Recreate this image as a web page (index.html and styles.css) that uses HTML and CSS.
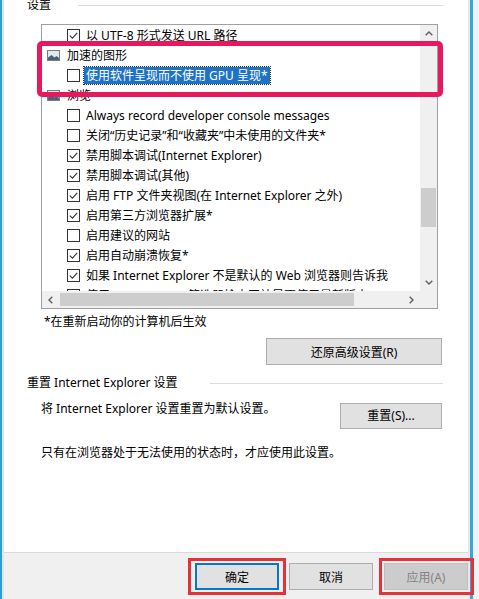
FILE: index.html
```html
<!DOCTYPE html>
<html lang="zh-CN">
  <head>
    <meta charset="UTF-8" />
    <title>Internet 选项 - 高级</title>
    <link rel="stylesheet" href="styles.css">
  </head>
  <body>
    <!-- shared glyphs -->
    <svg class="defs" width="0" height="0" aria-hidden="true">
      <symbol id="box" viewBox="0 0 13 13">
        <rect x="0.5" y="0.5" width="12" height="12" fill="#fff" stroke="#333"/>
      </symbol>
      <symbol id="tick" viewBox="0 0 13 13">
        <rect x="0.5" y="0.5" width="12" height="12" fill="#fff" stroke="#333"/>
        <path d="M2.8 6.6l2.6 2.6 4.8-5.4" fill="none" stroke="#333" stroke-width="1.1"/>
      </symbol>
      <symbol id="pic" viewBox="0 0 13 11">
        <rect x="0.5" y="0.5" width="12" height="10" fill="#dfe9f2" stroke="#7c7c7c"/>
        <path d="M1 10V7.5L4.5 5l3 2.5 2-1.5L12 8v2z" fill="#47627a"/>
      </symbol>
      <symbol id="up" viewBox="0 0 8 5"><path d="M0.7 4.3L4 1l3.3 3.3" fill="none" stroke="#606060" stroke-width="1.4"/></symbol>
      <symbol id="down" viewBox="0 0 8 5"><path d="M0.7 0.7L4 4l3.3-3.3" fill="none" stroke="#606060" stroke-width="1.4"/></symbol>
      <symbol id="left" viewBox="0 0 5 8"><path d="M4.3 0.7L1 4l3.3 3.3" fill="none" stroke="#606060" stroke-width="1.4"/></symbol>
      <symbol id="right" viewBox="0 0 5 8"><path d="M0.7 0.7L4 4 0.7 7.3" fill="none" stroke="#606060" stroke-width="1.4"/></symbol>
    </svg>

    <div class="screen">
      <div class="frame-left"></div>

      <div class="main">
        <div class="page">
          <!-- 设置 -->
          <div class="group-title"><span>设置</span><i class="rule"></i></div>

          <div class="listbox">
            <ul class="items">
              <li class="opt"><svg class="cb"><use href="#tick"/></svg><span>以 UTF-8 形式发送 URL 路径</span></li>
              <li class="cat"><svg class="ico"><use href="#pic"/></svg><span>加速的图形</span></li>
              <li class="opt"><svg class="cb"><use href="#box"/></svg><span class="sel">使用软件呈现而不使用 GPU 呈现*</span></li>
              <li class="cat"><svg class="ico"><use href="#pic"/></svg><span>浏览</span></li>
              <li class="opt"><svg class="cb"><use href="#box"/></svg><span>Always record developer console messages</span></li>
              <li class="opt"><svg class="cb"><use href="#box"/></svg><span>关闭“历史记录”和“收藏夹”中未使用的文件夹*</span></li>
              <li class="opt"><svg class="cb"><use href="#tick"/></svg><span>禁用脚本调试(Internet Explorer)</span></li>
              <li class="opt"><svg class="cb"><use href="#tick"/></svg><span>禁用脚本调试(其他)</span></li>
              <li class="opt"><svg class="cb"><use href="#tick"/></svg><span>启用 FTP 文件夹视图(在 Internet Explorer 之外)</span></li>
              <li class="opt"><svg class="cb"><use href="#tick"/></svg><span>启用第三方浏览器扩展*</span></li>
              <li class="opt"><svg class="cb"><use href="#box"/></svg><span>启用建议的网站</span></li>
              <li class="opt"><svg class="cb"><use href="#tick"/></svg><span>启用自动崩溃恢复*</span></li>
              <li class="opt"><svg class="cb"><use href="#tick"/></svg><span>如果 Internet Explorer 不是默认的 Web 浏览器则告诉我</span></li>
              <li class="opt"><svg class="cb"><use href="#tick"/></svg><span>使用 SmartScreen 筛选器检查网站是否使用最新版本</span></li>
            </ul>

            <div class="vbar">
              <span class="arrow"><svg class="chev-v"><use href="#up"/></svg></span>
              <div class="track"><div class="thumb-v"></div></div>
              <span class="arrow"><svg class="chev-v"><use href="#down"/></svg></span>
            </div>

            <div class="hbar">
              <span class="arrow"><svg class="chev-h"><use href="#left"/></svg></span>
              <div class="thumb-h"></div>
              <span class="spacer"></span>
              <span class="arrow"><svg class="chev-h"><use href="#right"/></svg></span>
            </div>
            <div class="corner"></div>
          </div>

          <p class="note">*在重新启动你的计算机后生效</p>

          <div class="actions">
            <button class="btn btn-restore" type="button">还原高级设置(R)</button>
          </div>

          <!-- 重置 -->
          <div class="group-title second"><span>重置 Internet Explorer 设置</span><i class="rule"></i></div>

          <div class="reset-row">
            <span>将 Internet Explorer 设置重置为默认设置。</span>
            <button class="btn btn-reset" type="button">重置(S)...</button>
          </div>

          <p class="hint">只有在浏览器处于无法使用的状态时，才应使用此设置。</p>

          <div class="focus-mark"></div>
        </div>

        <div class="footer">
          <span class="mark"><button class="btn fbtn default" type="button">确定</button></span>
          <button class="btn fbtn" type="button">取消</button>
          <span class="mark mark-apply"><button class="btn fbtn" type="button" disabled>应用(A)</button></span>
        </div>
      </div>

      <div class="frame-right"></div>
    </div>
  </body>
</html>
```

FILE: styles.css
```css
* {
  box-sizing: border-box;
}

body {
  margin: 0;
  font-family: "Noto Sans", "Noto Sans CJK SC", sans-serif;
  font-size: 12px;
  color: #000;
  background: #f0f0f0;
}

.defs {
  position: absolute;
  width: 0;
  height: 0;
}

.screen {
  display: flex;
  width: 479px;
  height: 599px;
  overflow: hidden;
}

.frame-left {
  width: 4px;
  background: linear-gradient(to right, #2a9fd0 0 2px, #dde6ec 2px);
}

.frame-right {
  width: 11px;
  background: linear-gradient(to right, #e4e9ee 0 2px, #3aa6d6 2px 5px, #eef3f6 5px);
}

.main {
  flex: 1;
  display: flex;
  flex-direction: column;
}

.page {
  position: relative;
  height: 553px;
  flex: none;
  background: #fff;
  border-bottom: 1px solid #d9d9d9;
  padding: 0 25px 0 23px;
}

.group-title {
  display: flex;
  align-items: center;
  gap: 27px;
  height: 16px;
  line-height: 16px;
  margin-top: -3px;
  white-space: nowrap;
}

.group-title.second {
  margin-top: 10px;
  gap: 32px;
}

.rule {
  flex: 1;
  height: 1px;
  background: #dcdcdc;
}

.listbox {
  margin: 11px 5px 0 14px;
  height: 285px;
  border: 1px solid #a0a0a0;
  display: grid;
  grid-template-columns: 1fr 17px;
  grid-template-rows: 1fr 17px;
}

.items {
  list-style: none;
  margin: 0;
  padding: 0;
  overflow: hidden;
}

.items li {
  height: 20px;
  display: flex;
  align-items: center;
  white-space: nowrap;
}

.opt {
  padding-left: 25px;
}

.cat {
  padding-left: 5px;
}

.cb {
  width: 13px;
  height: 13px;
  margin-right: 6px;
  flex: none;
}

.ico {
  width: 13px;
  height: 11px;
  margin-right: 7px;
  flex: none;
}

.sel {
  background: #1f73c6;
  color: #fff;
  outline: 1px dotted #333;
  padding: 0 2px;
  margin-left: -2px;
  line-height: 17px;
}

.vbar {
  background: #f0f0f0;
  display: flex;
  flex-direction: column;
}

.arrow {
  width: 17px;
  height: 17px;
  flex: none;
  display: flex;
  align-items: center;
  justify-content: center;
}

.chev-v {
  width: 8px;
  height: 5px;
}

.chev-h {
  width: 5px;
  height: 8px;
}

.track {
  flex: 1;
}

.thumb-v {
  margin: 146px auto 0;
  width: 15px;
  height: 39px;
  background: #cdcdcd;
}

.hbar {
  background: #f0f0f0;
  display: flex;
  align-items: center;
}

.thumb-h {
  margin-left: 1px;
  width: 294px;
  height: 13px;
  background: #cdcdcd;
}

.spacer {
  flex: 1;
}

.corner {
  background: #f0f0f0;
}

.note {
  margin: 5px 0 0 17px;
  line-height: 16px;
}

.actions {
  display: flex;
  justify-content: flex-end;
  margin-top: 8px;
  padding-right: 1px;
}

.btn {
  font: inherit;
  color: #000;
  height: 27px;
  padding: 0;
  background: #e1e1e1;
  border: 1px solid #adadad;
}

.btn-restore {
  width: 176px;
}

.reset-row {
  display: flex;
  justify-content: space-between;
  align-items: flex-start;
  margin: 10px 1px 0 14px;
  line-height: 16px;
}

.btn-reset {
  width: 102px;
  height: 26px;
  margin-top: 2px;
}

.hint {
  margin: 16px 0 0 14px;
  line-height: 16px;
}

.focus-mark {
  position: absolute;
  left: 33px;
  top: 41px;
  width: 406px;
  height: 56px;
  border: 5px solid #e8185c;
  border-radius: 5px;
}

.footer {
  position: relative;
  z-index: 1;
  flex: 1;
  display: flex;
  justify-content: flex-end;
  align-items: flex-start;
  gap: 10px;
  padding-top: 10px;
}

.fbtn {
  width: 84px;
}

.fbtn.default {
  border-color: #0078d7;
  box-shadow: inset 0 0 0 1px #0078d7;
}

.fbtn:disabled {
  background: #cccccc;
  border-color: #bfbfbf;
  color: #838383;
}

.mark {
  display: block;
  margin: -5px -7px;
  padding: 2px 4px;
  border: 3px solid #e53238;
}

.mark-apply {
  margin: -5px -6px -5px -5px;
  padding: 2px 3px 2px 2px;
  margin-left: -4px;
}
```
